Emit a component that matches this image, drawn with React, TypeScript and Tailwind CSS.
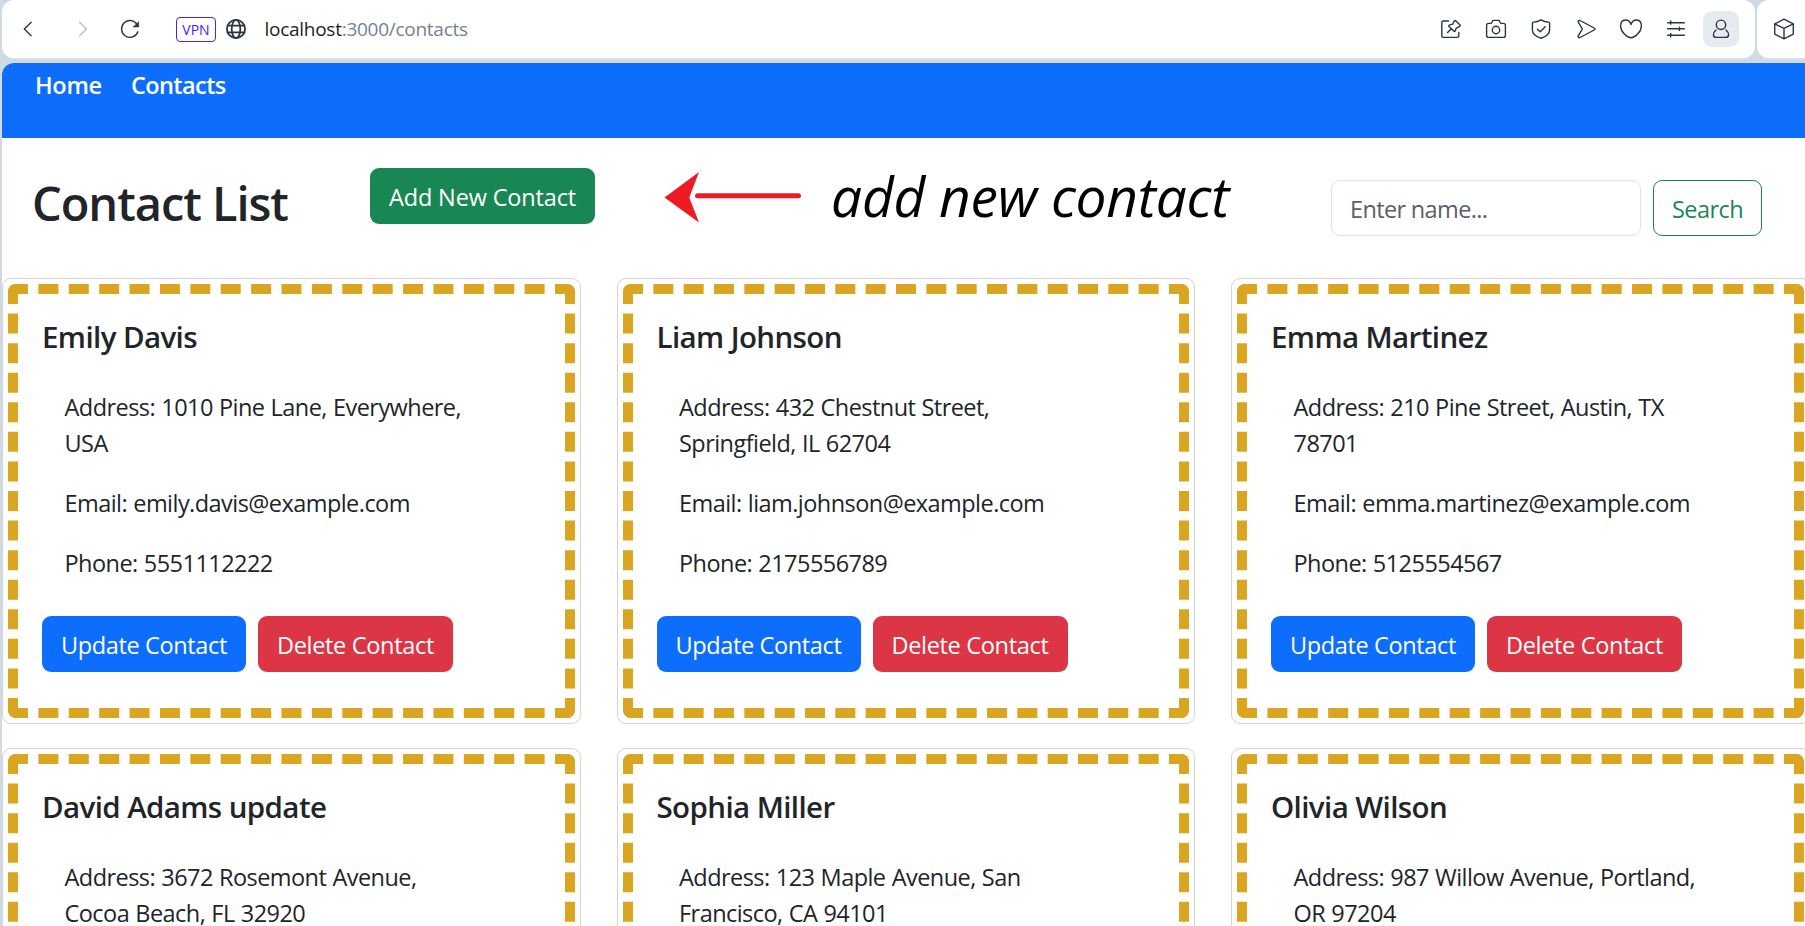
import type { ReactNode } from "react";

type Contact = { name: string; address: string[]; email?: string; phone?: string };

const contacts: Contact[] = [
  { name: "Emily Davis", address: ["Address: 1010 Pine Lane, Everywhere,", "USA"], email: "emily.davis@example.com", phone: "5551112222" },
  { name: "Liam Johnson", address: ["Address: 432 Chestnut Street,", "Springfield, IL 62704"], email: "liam.johnson@example.com", phone: "2175556789" },
  { name: "Emma Martinez", address: ["Address: 210 Pine Street, Austin, TX", "78701"], email: "emma.martinez@example.com", phone: "5125554567" },
  { name: "David Adams update", address: ["Address: 3672 Rosemont Avenue,", "Cocoa Beach, FL 32920"] },
  { name: "Sophia Miller", address: ["Address: 123 Maple Avenue, San", "Francisco, CA 94101"] },
  { name: "Olivia Wilson", address: ["Address: 987 Willow Avenue, Portland,", "OR 97204"] },
];

function Icon({ children, className = "text-[#2b3640]" }: { children: ReactNode; className?: string }) {
  return (
    <svg
      viewBox="-12 -12 24 24"
      className={`h-6 w-6 shrink-0 ${className}`}
      fill="none"
      stroke="currentColor"
      strokeWidth="1.4"
      strokeLinecap="round"
      strokeLinejoin="round"
    >
      {children}
    </svg>
  );
}

function Cell({ children }: { children: ReactNode }) {
  return <div className="flex w-[45px] justify-center">{children}</div>;
}

function Toolbar() {
  return (
    <div className="flex h-[58px] shrink-0 gap-[2px] pl-[2px]">
      <div className="flex w-[1753px] shrink-0 items-center rounded-xl bg-white pl-[14px] shadow-[0_1px_0_#dfe6eb]">
        <Icon><path d="M3.5 -7L-3.7 0L3.5 7" strokeLinecap="butt" /></Icon>
        <Icon className="ml-[31px] text-[#b9bec3]"><path d="M-3.7 -7L3.5 0L-3.7 7" strokeLinecap="butt" /></Icon>
        <Icon className="ml-[23px] text-[#2b3640]">
          <path d="M7.3 -4.2A8.4 8.4 0 1 0 7.9 2.8" />
          <path d="M8.7 -7V-2H3.4Z" fill="currentColor" strokeWidth="0.6" />
        </Icon>
        <div className="ml-[34px] flex h-[25px] w-10 items-center justify-center rounded-[4px] border border-[#4b22f0] text-[14px] text-[#4b22f0]">
          <span className="pt-[2px] leading-none">VPN</span>
        </div>
        <Icon className="ml-2 text-[#2b3640]">
          <g strokeWidth="1.8">
            <circle r="9.1" />
            <ellipse rx="4.3" ry="9.1" />
            <path d="M-8.4 -3.3H8.4M-8.4 3.3H8.4" />
          </g>
        </Icon>
        <div className="ml-[16.5px] text-[19px] tracking-[-0.27px] text-[#1b1f23]">
          localhost<span className="text-[#73828f]">:3000/contacts</span>
        </div>
        <div className="mr-[11px] ml-auto flex items-center">
          <Cell>
            <Icon>
              <path d="M-2.4 -8H-7.8Q-9.2 -8 -9.2 -6.6V7Q-9.2 8.4 -7.8 8.4H6.4Q7.8 8.4 7.8 7V3.4" />
              <path d="M3.2 -8Q4 -8.8 4.9 -8L8.8 -4.3Q9.7 -3.3 8.6 -2.6L5.3 -.9L4.1 2.1Q3.6 3 2.8 2.1L-2.1 -2.6Q-2.6 -3.5 -1.6 -3.8L1.7 -4.8ZM.3 -.2L-3.4 3.6" />
            </Icon>
          </Cell>
          <Cell>
            <Icon>
              <path d="M-7.4 -5.6H-5.2Q-4.4 -5.6 -4.1 -6.6L-3.7 -7.7Q-3.4 -8.6 -2.4 -8.6H2.4Q3.4 -8.6 3.7 -7.7L4.1 -6.6Q4.4 -5.6 5.2 -5.6H7.4Q9.4 -5.6 9.4 -3.6V6.4Q9.4 8.4 7.4 8.4H-7.4Q-9.4 8.4 -9.4 6.4V-3.6Q-9.4 -5.6 -7.4 -5.6Z" />
              <circle cy="1" r="3.7" />
            </Icon>
          </Cell>
          <Cell>
            <Icon>
              <path d="M0 -9.2C2.6 -7.6 5 -7 7.4 -6.9Q8.6 -6.8 8.6 -5.6V.8C8.6 5 4.4 8 0 9.2C-4.4 8 -8.6 5 -8.6 .8V-5.6Q-8.6 -6.8 -7.4 -6.9C-5 -7 -2.6 -7.6 0 -9.2Z" />
              <path d="M-3.6 .2L-.7 2.8L4.2 -2.3" />
            </Icon>
          </Cell>
          <Cell>
            <Icon>
              <path d="M-6 -8.5L8.2 -1Q10 0 8.2 1L-6 8.5Q-8.4 8.9 -7.7 6.6L-4.2 1.2Q-3.4 0 -4.2 -1.2L-7.7 -6.6Q-8.4 -8.9 -6 -8.5Z" />
            </Icon>
          </Cell>
          <Cell>
            <Icon>
              <path d="M0 -4.6C-1.2 -8 -3.6 -9.2 -5.7 -9C-9 -8.7 -10.5 -6 -10.4 -2.8C-10.2 3.2 -3.4 8.8 0 8.8C3.4 8.8 10.2 3.2 10.4 -2.8C10.5 -6 9 -8.7 5.7 -9C3.6 -9.2 1.2 -8 0 -4.6Z" />
            </Icon>
          </Cell>
          <Cell>
            <Icon>
              <path d="M-8.8 -6.3H8.8M-8.8 -.2H8.8M-8.8 6.2H8.8M-5.3 -8.4V-4.2M3.4 -2.3V1.9M-5.3 4.1V8.3" strokeLinecap="butt" />
            </Icon>
          </Cell>
          <div className="mr-[5px] ml-[4.5px] flex h-9 w-9 items-center justify-center rounded-[9px] bg-[#e6ebef]">
            <Icon>
              <circle cy="-4.2" r="4.7" />
              <path d="M-5 1C-6.7 2.4 -7.6 4.2 -7.6 5.9C-7.6 7.6 -6.2 8.4 -4.2 8.4H4.2C6.2 8.4 7.6 7.6 7.6 5.9C7.6 4.2 6.7 2.4 5 1" />
            </Icon>
          </div>
        </div>
      </div>
      <div className="flex w-[60px] shrink-0 items-center rounded-xl bg-white pl-[15px] shadow-[0_1px_0_#dfe6eb]">
        <Icon>
          <path d="M0 -9.8L9.3 -5.1V5.1L0 9.8L-9.3 5.1V-5.1ZM-9.3 -5.1L0 -.6L9.3 -5.1M0 -.6V9.8" />
        </Icon>
      </div>
    </div>
  );
}

function ContactCard({ c }: { c: Contact }) {
  return (
    <article className="h-[446px] rounded-[9px] border border-[#d3d3d4] bg-white p-[5px]">
      <div className="h-full rounded-[8px] border-[10px] border-dashed border-[#daa520] pt-[25px] pl-6">
        <h5 className="h-9 text-[29.5px] leading-9 font-semibold tracking-[-0.6px] whitespace-nowrap">{c.name}</h5>
        <div className="mt-[34px] flex flex-col gap-6 pl-[22.5px] text-[23.5px] leading-9 tracking-[-0.55px] whitespace-nowrap [word-spacing:0.6px]">
          <p>
            {c.address[0]}
            <br />
            {c.address[1]}
          </p>
          {c.email && <p>Email: {c.email}</p>}
          {c.phone && <p>Phone: {c.phone}</p>}
        </div>
        {c.phone && (
          <div className="mt-[35px] flex gap-3 text-[23.5px] leading-9 text-white">
            <button className="h-14 w-[204px] rounded-[9px] bg-[#0d6efd] pt-px tracking-[-0.37px]">Update Contact</button>
            <button className="h-14 w-[195px] rounded-[9px] bg-[#dc3545] pt-px tracking-[-0.31px]">Delete Contact</button>
          </div>
        )}
      </div>
    </article>
  );
}

export default function App() {
  return (
    <div className="flex h-[926px] w-[1805px] flex-col overflow-hidden bg-[#d0dae2] font-['Open_Sans','Noto_Sans',sans-serif] text-[#212529]">
      <Toolbar />
      <div className="mt-[5px] ml-[2px] flex min-h-0 flex-1 flex-col overflow-hidden rounded-tl-xl bg-white">
        <nav className="flex h-[75px] shrink-0 gap-[29px] bg-[#0d6efd] pt-[4px] pl-[33px] text-[23.5px] leading-9 font-semibold text-white">
          <a className="w-[67px] tracking-[-0.3px]">Home</a>
          <a className="tracking-[-0.6px]">Contacts</a>
        </nav>
        <header className="flex h-[140px] shrink-0 items-start pl-[30px]">
          <h1 className="mt-[36px] w-[338px] text-[47px] leading-[58px] font-semibold tracking-[-1.05px]">Contact List</h1>
          <button className="mt-[30px] h-14 w-[225px] rounded-[9px] bg-[#198754] pt-px text-[23.5px] leading-9 tracking-[-0.16px] text-white">
            Add New Contact
          </button>
          <svg viewBox="0 0 138 52" className="mt-[33px] ml-[69px] h-[52px] w-[138px]" fill="#ed1c24">
            <path d="M.5 26.5L35 1L25.3 26.5L35 51.5Z" />
            <path d="M33.5 24.8H134.5" stroke="#ed1c24" strokeWidth="5" strokeLinecap="round" />
          </svg>
          <p className="mt-[25px] ml-[29px] text-[55px] leading-[66px] tracking-[-0.22px] whitespace-nowrap text-black italic">add new contact</p>
          <form className="mt-[42px] mr-[43px] ml-auto flex gap-3 text-[23.5px]">
            <input
              className="h-14 w-[310px] rounded-[9px] border border-[#dee2e6] px-[18px] pt-px tracking-[-0.65px] placeholder:text-[#595f65]"
              placeholder="Enter name..."
            />
            <button className="h-14 w-[109px] rounded-[9px] border border-[#198754] pt-px leading-9 tracking-[-0.57px] text-[#198754]">Search</button>
          </form>
        </header>
        <main className="grid w-[1808px] grid-cols-[repeat(3,578.5px)] gap-x-9 gap-y-6">
          {contacts.map((c) => (
            <ContactCard key={c.name} c={c} />
          ))}
        </main>
      </div>
    </div>
  );
}
